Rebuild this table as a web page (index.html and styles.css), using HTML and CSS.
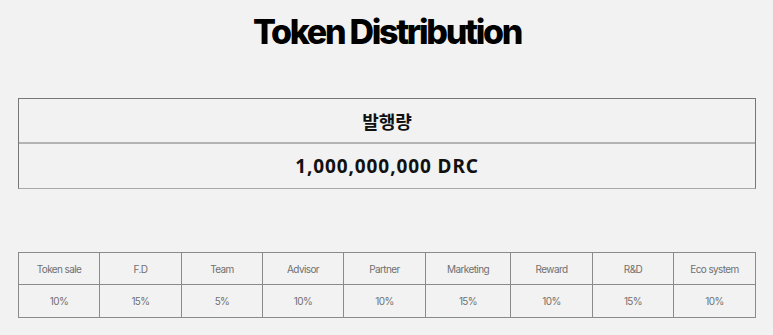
FILE: index.html
```html
<!DOCTYPE html>
<html lang="ko">
<head>
<meta charset="utf-8">
<title>Token Distribution</title>
<link rel="stylesheet" href="styles.css">
</head>
<body>
<main class="page">
  <h1 class="title">Token Distribution</h1>
  <section class="supply">
    <div class="supply-head">발행량</div>
    <div class="supply-value">1,000,000,000 DRC</div>
  </section>
  <div class="dist">
    <div class="cell head">Token sale</div>
    <div class="cell head">F.D</div>
    <div class="cell head">Team</div>
    <div class="cell head">Advisor</div>
    <div class="cell head">Partner</div>
    <div class="cell head">Marketing</div>
    <div class="cell head">Reward</div>
    <div class="cell head">R&amp;D</div>
    <div class="cell head">Eco system</div>
    <div class="cell val">10%</div>
    <div class="cell val">15%</div>
    <div class="cell val">5%</div>
    <div class="cell val">10%</div>
    <div class="cell val">10%</div>
    <div class="cell val">15%</div>
    <div class="cell val">10%</div>
    <div class="cell val">15%</div>
    <div class="cell val">10%</div>
  </div>
</main>
</body>
</html>
```

FILE: styles.css
```css
html, body {
  margin: 0;
  padding: 0;
  background: #f2f2f2;
}
* { box-sizing: border-box; }
.page {
  width: 774px;
  padding: 12px 18px 0 18px;
  display: flex;
  flex-direction: column;
}
.title {
  margin: 0;
  text-align: center;
  font-family: Inter, "Liberation Sans", sans-serif;
  font-weight: 800;
  font-size: 34px;
  line-height: 40px;
  letter-spacing: -2.3px;
  color: #000;
}
.supply {
  margin-top: 46px;
  width: 738px;
  border: 1px solid #777;
  border-bottom-color: #a8a8a8;
  display: flex;
  flex-direction: column;
  font-family: "Noto Sans", "Noto Sans CJK KR", sans-serif;
  font-weight: 700;
  color: #111;
  font-size: 19px;
}
.supply-head {
  height: 45px;
  display: flex;
  align-items: center;
  justify-content: center;
  border-bottom: 2px solid #b3b3b3;
  font-family: "Noto Sans CJK KR", sans-serif;
  font-size: 18px;
}
.supply-value {
  height: 44px;
  display: flex;
  align-items: center;
  justify-content: center;
  letter-spacing: 0.9px;
}
.dist {
  margin-top: 63px;
  width: 738px;
  display: grid;
  grid-template-columns: 81px 82px 81px 81px 82px 85px 82px 81px 82px;
  border-left: 1px solid #8a8a8a;
  border-top: 1px solid #8a8a8a;
  font-family: Inter, "Liberation Sans", sans-serif;
  font-size: 10px;
  letter-spacing: -0.6px;
  color: #707070;
}
.cell {
  display: flex;
  align-items: center;
  justify-content: center;
  border-right: 1px solid #8a8a8a;
  border-bottom: 1px solid #8a8a8a;
}
.head { height: 32px; }
.val { height: 33px; }
```
